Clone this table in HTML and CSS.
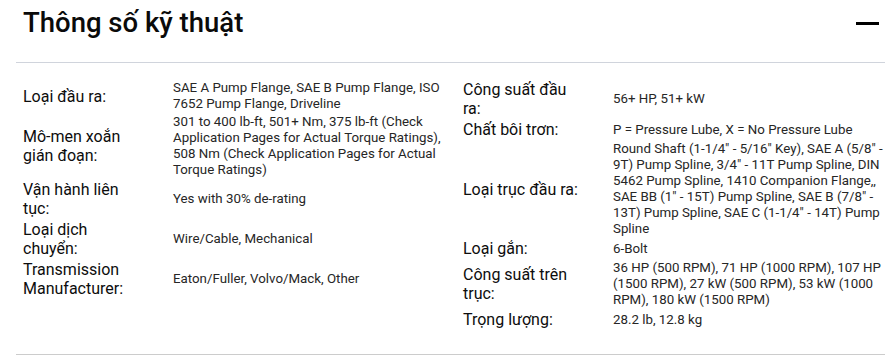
FILE: index.html
```html
<!DOCTYPE html>
<html lang="vi">
<head>
<meta charset="utf-8">
<title>Thông số kỹ thuật</title>
<link rel="stylesheet" href="styles.css">
</head>
<body>
<section class="specs">
  <header class="specs-head">
    <h2 class="specs-title">Thông số kỹ thuật</h2>
    <span class="collapse-icon" aria-label="Thu gọn"></span>
  </header>
  <div class="specs-body">
    <div class="specs-col specs-col-left">
      <div class="spec-row">
        <div class="spec-label">Loại đầu ra:</div>
        <div class="spec-value">SAE A Pump Flange, SAE B Pump Flange, ISO 7652 Pump Flange, Driveline</div>
      </div>
      <div class="spec-row">
        <div class="spec-label">Mô-men xoắn gián đoạn:</div>
        <div class="spec-value">301 to 400 lb-ft, 501+ Nm, 375 lb-ft (Check Application Pages for Actual Torque Ratings), 508 Nm (Check Application Pages for Actual Torque Ratings)</div>
      </div>
      <div class="spec-row">
        <div class="spec-label">Vận hành liên tục:</div>
        <div class="spec-value">Yes with 30% de-rating</div>
      </div>
      <div class="spec-row">
        <div class="spec-label">Loại dịch chuyển:</div>
        <div class="spec-value">Wire/Cable, Mechanical</div>
      </div>
      <div class="spec-row">
        <div class="spec-label">Transmission Manufacturer:</div>
        <div class="spec-value">Eaton/Fuller, Volvo/Mack, Other</div>
      </div>
    </div>
    <div class="specs-col specs-col-right">
      <div class="spec-row">
        <div class="spec-label">Công suất đầu ra:</div>
        <div class="spec-value">56+ HP, 51+ kW</div>
      </div>
      <div class="spec-row">
        <div class="spec-label">Chất bôi trơn:</div>
        <div class="spec-value">P = Pressure Lube, X = No Pressure Lube</div>
      </div>
      <div class="spec-row">
        <div class="spec-label">Loại trục đầu ra:</div>
        <div class="spec-value">Round Shaft (1-1/4" - 5/16" Key), SAE A (5/8" - 9T) Pump Spline, 3/4" - 11T Pump Spline, DIN 5462 Pump Spline, 1410 Companion Flange,, SAE BB (1" - 15T) Pump Spline, SAE B (7/8" - 13T) Pump Spline, SAE C (1-1/4" - 14T) Pump Spline</div>
      </div>
      <div class="spec-row">
        <div class="spec-label">Loại gắn:</div>
        <div class="spec-value">6-Bolt</div>
      </div>
      <div class="spec-row">
        <div class="spec-label">Công suất trên trục:</div>
        <div class="spec-value">36 HP (500 RPM), 71 HP (1000 RPM), 107 HP (1500 RPM), 27 kW (500 RPM), 53 kW (1000 RPM), 180 kW (1500 RPM)</div>
      </div>
      <div class="spec-row">
        <div class="spec-label">Trọng lượng:</div>
        <div class="spec-value">28.2 lb, 12.8 kg</div>
      </div>
    </div>
  </div>
</section>
</body>
</html>
```

FILE: styles.css
```css
html, body {
  margin: 0;
  padding: 0;
  background: #ffffff;
}

body {
  font-family: Roboto, "Liberation Sans", Arial, sans-serif;
  color: #111111;
}

.specs {
  margin-left: 16px;
  width: 869px;
  border-bottom: 1px solid #cccccc;
}

.specs-head {
  height: 56px;
  padding: 6px 6px 0 7px;
  display: flex;
  justify-content: space-between;
  align-items: flex-start;
  border-bottom: 1px solid #d0d4dc;
}

.specs-title {
  margin: 0;
  font-size: 27.5px;
  font-weight: 500;
  line-height: normal;
  color: #0a0a0a;
}

.collapse-icon {
  display: block;
  width: 23px;
  height: 3px;
  margin-top: 16px;
  background: #000000;
}

.specs-body {
  display: grid;
  grid-template-columns: 440px 422px;
  padding: 17px 0 25px 7px;
}

.specs-col {
  display: flex;
  flex-direction: column;
  gap: 2px;
}

.specs-col-left {
  padding-right: 10px;
}

.spec-row {
  display: flex;
  align-items: center;
}

.spec-label {
  flex: none;
  width: 118px;
  padding-right: 32px;
  font-size: 16px;
  line-height: normal;
  color: #0d0d0d;
}

.spec-value {
  flex: 1;
  min-width: 0;
  font-size: 13.3px;
  line-height: 16px;
  color: #262626;
}
```
